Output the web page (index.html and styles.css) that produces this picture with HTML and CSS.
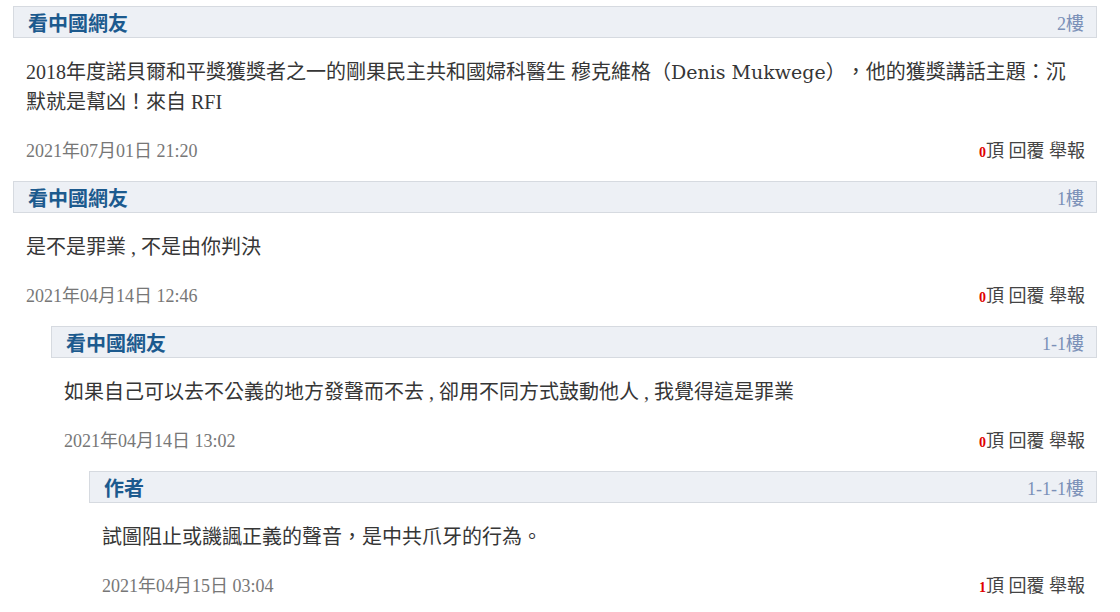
FILE: index.html
```html
<!DOCTYPE html>
<html lang="zh-Hant">
<head>
<meta charset="utf-8">
<link rel="stylesheet" href="styles.css">
</head>
<body>
<div class="comments">
  <div class="comment">
    <div class="head"><span class="name">看中國網友</span><span class="floor">2樓</span></div>
    <div class="text">2018年度諾貝爾和平獎獲獎者之一的剛果民主共和國婦科醫生 穆克維格（<span class="latin">Denis Mukwege</span>），他的獲獎講話主題：沉默就是幫凶！來自 RFI</div>
    <div class="meta"><span class="date">2021年07月01日 21:20</span><span class="actions"><b class="count">0</b>頂 回覆 舉報</span></div>
  </div>
  <div class="comment">
    <div class="head"><span class="name">看中國網友</span><span class="floor">1樓</span></div>
    <div class="text">是不是罪業 , 不是由你判決</div>
    <div class="meta"><span class="date">2021年04月14日 12:46</span><span class="actions"><b class="count">0</b>頂 回覆 舉報</span></div>
    <div class="replies">
      <div class="comment">
        <div class="head"><span class="name">看中國網友</span><span class="floor">1-1樓</span></div>
        <div class="text">如果自己可以去不公義的地方發聲而不去 , 卻用不同方式鼓動他人 , 我覺得這是罪業</div>
        <div class="meta"><span class="date">2021年04月14日 13:02</span><span class="actions"><b class="count">0</b>頂 回覆 舉報</span></div>
        <div class="replies">
          <div class="comment">
            <div class="head"><span class="name">作者</span><span class="floor">1-1-1樓</span></div>
            <div class="text">試圖阻止或譏諷正義的聲音，是中共爪牙的行為。</div>
            <div class="meta"><span class="date">2021年04月15日 03:04</span><span class="actions"><b class="count">1</b>頂 回覆 舉報</span></div>
          </div>
        </div>
      </div>
    </div>
  </div>
</div>
</body>
</html>
```
FILE: styles.css
```css
html, body {
  margin: 0;
  padding: 0;
  background: #ffffff;
}
body {
  font-family: "Liberation Serif", "Noto Sans CJK TC", serif;
  color: #333333;
  padding: 6px 23px 0 13px;
  text-spacing-trim: space-all;
}
.comments {
  display: flex;
  flex-direction: column;
}
.comment {
  display: flex;
  flex-direction: column;
}
.head {
  display: flex;
  justify-content: space-between;
  align-items: center;
  height: 32px;
  box-sizing: border-box;
  background: #edf0f5;
  border: 1px solid #d6dae0;
  padding: 0 12px 0 14px;
}
.name {
  font-size: 20px;
  font-weight: bold;
  color: #1c5a8e;
}
.floor {
  font-size: 18px;
  color: #7b90b8;
}
.text {
  font-size: 20px;
  line-height: 30px;
  padding: 19px 13px 0 13px;
  color: #363636;
}
.latin {
  font-family: "DejaVu Serif", serif;
  font-size: 19px;
}
.meta {
  display: flex;
  justify-content: space-between;
  align-items: center;
  height: 30px;
  margin: 17px 0 17px 0;
  padding: 0 12px 0 13px;
  font-size: 18px;
}
.date {
  color: #777777;
}
.actions {
  color: #444444;
}
.count {
  color: #e00000;
  font-size: 14px;
}
.replies {
  display: flex;
  flex-direction: column;
  padding-left: 38px;
}
```
